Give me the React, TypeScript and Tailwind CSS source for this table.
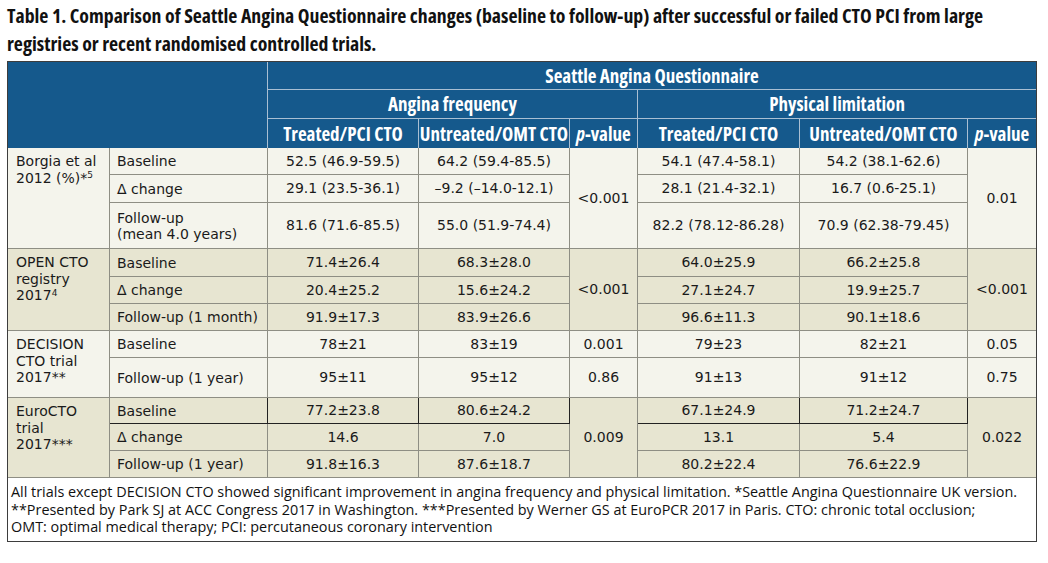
import React from 'react';

type Row = {
  name: React.ReactNode;
  h: string;
  cells: [string, string, string, string];
  p1?: string;
  p2?: string;
  dark?: boolean;
};

type Group = {
  label: React.ReactNode;
  shade: boolean;
  p1?: string;
  p2?: string;
  rows: Row[];
};

const groups: Group[] = [
  {
    label: (
      <>
        Borgia et al
        <br />
        2012 (%)*<sup className="text-[9px]">5</sup>
      </>
    ),
    shade: false,
    p1: '<0.001',
    p2: '0.01',
    rows: [
      { name: 'Baseline', h: 'h-[27px]', cells: ['52.5 (46.9-59.5)', '64.2 (59.4-85.5)', '54.1 (47.4-58.1)', '54.2 (38.1-62.6)'] },
      { name: 'Δ change', h: 'h-[28px]', cells: ['29.1 (23.5-36.1)', '–9.2 (–14.0-12.1)', '28.1 (21.4-32.1)', '16.7 (0.6-25.1)'] },
      {
        name: (
          <>
            Follow-up
            <br />
            (mean 4.0 years)
          </>
        ),
        h: 'h-[46px]',
        cells: ['81.6 (71.6-85.5)', '55.0 (51.9-74.4)', '82.2 (78.12-86.28)', '70.9 (62.38-79.45)'],
      },
    ],
  },
  {
    label: (
      <>
        OPEN CTO
        <br />
        registry
        <br />
        2017<sup className="text-[9px]">4</sup>
      </>
    ),
    shade: true,
    p1: '<0.001',
    p2: '<0.001',
    rows: [
      { name: 'Baseline', h: 'h-[28px]', cells: ['71.4±26.4', '68.3±28.0', '64.0±25.9', '66.2±25.8'] },
      { name: 'Δ change', h: 'h-[27px]', cells: ['20.4±25.2', '15.6±24.2', '27.1±24.7', '19.9±25.7'] },
      { name: 'Follow-up (1 month)', h: 'h-[27px]', cells: ['91.9±17.3', '83.9±26.6', '96.6±11.3', '90.1±18.6'] },
    ],
  },
  {
    label: (
      <>
        DECISION
        <br />
        CTO trial
        <br />
        2017**
      </>
    ),
    shade: false,
    rows: [
      { name: 'Baseline', h: 'h-[27px]', cells: ['78±21', '83±19', '79±23', '82±21'], p1: '0.001', p2: '0.05' },
      { name: 'Follow-up (1 year)', h: 'h-[40px]', cells: ['95±11', '95±12', '91±13', '91±12'], p1: '0.86', p2: '0.75' },
    ],
  },
  {
    label: (
      <>
        EuroCTO
        <br />
        trial
        <br />
        2017***
      </>
    ),
    shade: true,
    p1: '0.009',
    p2: '0.022',
    rows: [
      { name: 'Baseline', h: 'h-[26px]', cells: ['77.2±23.8', '80.6±24.2', '67.1±24.9', '71.2±24.7'], dark: true },
      { name: 'Δ change', h: 'h-[27px]', cells: ['14.6', '7.0', '13.1', '5.4'] },
      { name: 'Follow-up (1 year)', h: 'h-[27px]', cells: ['91.8±16.3', '87.6±18.7', '80.2±22.4', '76.6±22.9'] },
    ],
  },
];

const narrow = "font-['Open_Sans','DejaVu_Sans_Condensed',sans-serif]";
const hb = 'border-[#a9bfd3]';
const cb = 'border-[#8e8e84]';

export default function App() {
  return (
    <div className="w-[1048px] h-[563px] bg-white pl-[7px] pt-[2px] text-[#1a1a1a]">
      <h1 className={`${narrow} font-stretch-[75%] font-bold text-[19.8px] leading-[28px] text-[#111] whitespace-nowrap`}>
        Table 1. Comparison of Seattle Angina Questionnaire changes (baseline to follow-up) after successful or failed CTO PCI from large
        <br />
        registries or recent randomised controlled trials.
      </h1>

      <div className="mt-[3px] w-[1030px] border border-[#3d3d3d]">
        <table className="w-[1028px] table-fixed border-separate border-spacing-0 font-['DejaVu_Sans',sans-serif] text-[14px]">
          <colgroup>
            <col className="w-[102px]" />
            <col className="w-[158px]" />
            <col className="w-[151px]" />
            <col className="w-[151px]" />
            <col className="w-[68px]" />
            <col className="w-[162px]" />
            <col className="w-[168px]" />
            <col className="w-[68px]" />
          </colgroup>
          <thead className={`${narrow} font-stretch-[75%] font-bold bg-[#15598c] text-white text-[19px] leading-[22px] whitespace-nowrap`}>
            <tr className="h-[28px]">
              <th colSpan={2} rowSpan={3} className={`border-r ${hb}`} />
              <th colSpan={6} className={`border-b ${hb}`}>
                Seattle Angina Questionnaire
              </th>
            </tr>
            <tr className="h-[29px]">
              <th colSpan={3} className={`border-r border-b ${hb}`}>
                Angina frequency
              </th>
              <th colSpan={3} className={`border-b ${hb}`}>
                Physical limitation
              </th>
            </tr>
            <tr className="h-[29px]">
              <th className={`border-r ${hb}`}>Treated/PCI CTO</th>
              <th className={`border-r ${hb}`}>Untreated/OMT CTO</th>
              <th className={`border-r ${hb}`}>
                <i>p</i>-value
              </th>
              <th className={`border-r ${hb}`}>Treated/PCI CTO</th>
              <th className={`border-r ${hb}`}>Untreated/OMT CTO</th>
              <th>
                <i>p</i>-value
              </th>
            </tr>
          </thead>
          <tbody className="whitespace-nowrap">
            {groups.map((g, gi) =>
              g.rows.map((r, ri) => {
                const bg = g.shade ? 'bg-[#e7e5d1]' : 'bg-[#f4f4ec]';
                const bcol = r.dark ? 'border-[#222]' : cb;
                const span = g.rows.length;
                return (
                  <tr key={`${gi}-${ri}`} className={`${r.h} ${bg}`}>
                    {ri === 0 && (
                      <td rowSpan={span} className={`border-r border-b ${cb} align-top pl-[8px] pt-[5px] leading-[16.5px]`}>
                        {g.label}
                      </td>
                    )}
                    <td className={`border-r border-b ${bcol} pl-[7px] leading-[16px]`}>{r.name}</td>
                    <td className={`border-r border-b ${bcol} text-center`}>{r.cells[0]}</td>
                    <td className={`border-r border-b ${bcol} text-center`}>{r.cells[1]}</td>
                    {g.p1 ? (
                      ri === 0 && (
                        <td rowSpan={span} className={`border-r border-b ${cb} text-center`}>
                          {g.p1}
                        </td>
                      )
                    ) : (
                      <td className={`border-r border-b ${cb} text-center`}>{r.p1}</td>
                    )}
                    <td className={`border-r border-b ${bcol} text-center`}>{r.cells[2]}</td>
                    <td className={`border-r border-b ${bcol} text-center`}>{r.cells[3]}</td>
                    {g.p2 ? (
                      ri === 0 && (
                        <td rowSpan={span} className={`border-b ${cb} text-center`}>
                          {g.p2}
                        </td>
                      )
                    ) : (
                      <td className={`border-b ${cb} text-center`}>{r.p2}</td>
                    )}
                  </tr>
                );
              })
            )}
          </tbody>
        </table>
        <p className={`${narrow} px-[3px] pt-[5px] pb-[5px] text-[14.4px] leading-[17.5px] text-[#111] bg-white`}>
          All trials except DECISION CTO showed significant improvement in angina frequency and physical limitation. *Seattle Angina Questionnaire UK version.
          <br />
          **Presented by Park SJ at ACC Congress 2017 in Washington. ***Presented by Werner GS at EuroPCR 2017 in Paris. CTO: chronic total occlusion;
          <br />
          OMT: optimal medical therapy; PCI: percutaneous coronary intervention
        </p>
      </div>
    </div>
  );
}
